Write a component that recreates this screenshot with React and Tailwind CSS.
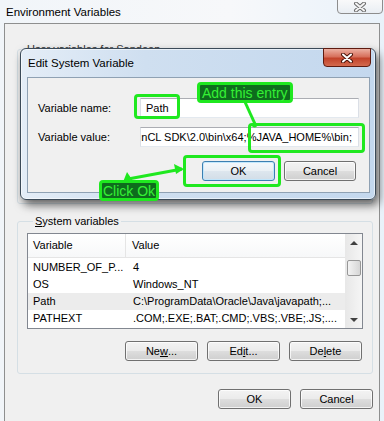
import React from "react";

const btn =
  "h-[20px] w-[73px] rounded-[3px] border border-[#707070] bg-[linear-gradient(#f3f3f3_0%,#ebebeb_48%,#dddddd_52%,#cfcfcf_100%)] shadow-[inset_0_0_0_1px_rgba(255,255,255,0.75)] flex items-center justify-center text-[11px] text-black";

const okBtn =
  "h-[20px] w-[73px] rounded-[3px] border border-[#3c7fb1] bg-[linear-gradient(#f4f8fb_0%,#eaf0f5_48%,#dde6ee_52%,#d2dde7_100%)] shadow-[inset_0_0_0_1px_rgba(190,230,253,0.9)] flex items-center justify-center text-[11px] text-black";

const green = "border-[3px] border-[#1fe81f] rounded-[4px]";

const rows = [
  ["NUMBER_OF_P...", "4"],
  ["OS", "Windows_NT"],
  ["Path", "C:\\ProgramData\\Oracle\\Java\\javapath;..."],
  ["PATHEXT", ".COM;.EXE;.BAT;.CMD;.VBS;.VBE;.JS;...."],
];

function CloseX({ dark }) {
  return (
    <svg width="14" height="10" viewBox="0 0 14 10">
      <path d="M3 1.5 L11 8.5 M11 1.5 L3 8.5" stroke={dark ? "#4a1308" : "#6b6b6b"} strokeWidth="4" strokeLinecap="round" />
      <path d="M3 1.5 L11 8.5 M11 1.5 L3 8.5" stroke={dark ? "#ffffff" : "#f4f4f4"} strokeWidth="2" strokeLinecap="round" />
    </svg>
  );
}

export default function App() {
  return (
    <div className="relative w-[384px] h-[421px] overflow-hidden bg-[linear-gradient(90deg,#f1f5f9,#f7f8fa_60%,#e9f2fa)] font-['Liberation_Sans',Arial,sans-serif] text-[11px] text-black">
      {/* window title */}
      <div className="h-[23px] flex items-start justify-between">
        <span className="ml-[6px] mt-[5px] text-[11.5px] leading-[14px]">Environment Variables</span>
        <div className="-mt-[2px] mr-[1px] h-[16px] w-[46px] rounded-b-[4px] border border-[#8d8d8d] bg-[linear-gradient(#fafafa,#e9eef3)] flex items-center justify-center pt-[1px]">
          <CloseX />
        </div>
      </div>

      {/* client area */}
      <div className="ml-[4px] mr-[4px] h-[398px] border-l border-t border-r border-[#8e8f8f] bg-[#f0f0f0] pl-[12px] pr-[6px] flex flex-col">
        <fieldset className="mt-[18px] h-[162px] border border-[#d5dfe5] rounded-[3px]">
          <legend className="ml-[7px] px-[2px] leading-[14px] text-[#333]">User variables for Sandeep</legend>
        </fieldset>

        <fieldset className="mt-[10px] h-[160px] border border-[#d5dfe5] rounded-[3px] pl-[9px] pr-[9px] pt-[5px]">
          <legend className="ml-[6px] px-[2px] leading-[14px]">
            <span className="underline">S</span>ystem variables
          </legend>
          <div className="h-[96px] border border-[#828790] bg-white flex">
            <div className="flex-1 flex flex-col">
              <div className="h-[24px] flex border-b border-[#e5e5e5] bg-[linear-gradient(#ffffff,#f7f8f9)]">
                <div className="w-[98px] pl-[5px] flex items-center border-r border-[#e5e5e5]">Variable</div>
                <div className="flex-1 pl-[6px] flex items-center">Value</div>
              </div>
              <div className="mt-[1px] flex flex-col">
                {rows.map(([k, v]) => (
                  <div key={k} className={`h-[17px] flex items-center whitespace-nowrap ${k === "Path" ? "bg-[#ececec]" : ""}`}>
                    <div className="w-[98px] pl-[5px] overflow-hidden">{k}</div>
                    <div className="flex-1 pl-[7px] overflow-hidden">{v}</div>
                  </div>
                ))}
              </div>
            </div>
            {/* scrollbar */}
            <div className="w-[17px] border-l border-[#e8e8e8] bg-[linear-gradient(90deg,#e8e8e8,#f5f5f5)] flex flex-col items-center">
              <div className="h-[17px] flex items-center justify-center">
                <div className="w-0 h-0 border-l-[4px] border-r-[4px] border-b-[4px] border-l-transparent border-r-transparent border-b-[#404040]" />
              </div>
              <div className="mt-[9px] h-[16px] w-[14px] rounded-[2px] border border-[#979797] bg-[linear-gradient(90deg,#f3f3f3,#e2e2e2_60%,#d6d6d6)]" />
              <div className="flex-1" />
              <div className="h-[17px] flex items-center justify-center">
                <div className="w-0 h-0 border-l-[4px] border-r-[4px] border-t-[4px] border-l-transparent border-r-transparent border-t-[#404040]" />
              </div>
            </div>
          </div>
          <div className="mt-[12px] mr-[1px] flex justify-end gap-[9px]">
            <div className={btn}>Ne<span className="underline">w</span>...</div>
            <div className={btn}>Ed<span className="underline">i</span>t...</div>
            <div className={btn}>De<span className="underline">l</span>ete</div>
          </div>
        </fieldset>

        <div className="mt-[15px] flex justify-end gap-[9px]">
          <div className={btn}>OK</div>
          <div className={btn}>Cancel</div>
        </div>
      </div>

      {/* Edit System Variable dialog */}
      <div className="absolute left-[20px] top-[48px] w-[356px] h-[152px] rounded-[6px] border border-[#3b4a58] bg-[linear-gradient(90deg,#e4edf7,#cfdff0_35%,#c4d8ee)] shadow-[3px_5px_10px_rgba(0,0,0,0.6),inset_0_0_0_1px_rgba(255,255,255,0.55)] flex flex-col">
        <div className="h-[28px] flex items-start justify-between">
          <span className="ml-[7px] mt-[7px] text-[11.5px] leading-[14px]">Edit System Variable</span>
          <div className="mr-[4px] -mt-[1px] h-[19px] w-[48px] rounded-b-[4px] border border-[#5e1b10] bg-[linear-gradient(#ecb0a2,#d7705c_45%,#c2432b_55%,#d36a4e)] flex items-center justify-center">
            <CloseX dark />
          </div>
        </div>
        <div className="ml-[6px] mr-[5px] mb-[6px] flex-1 border border-[#8fa1b3] bg-[#f0f0f0] flex flex-col">
          <div className="mt-[20px] flex items-center">
            <div className="pl-[10px] w-[112px]">Variable name:</div>
            <div className="h-[20px] w-[219px] border border-[#abadb3] border-l-[#dbdfe6] border-r-[#dbdfe6] border-b-[#e3e9ef] bg-white flex items-center pl-[5px]">Path</div>
          </div>
          <div className="mt-[9px] flex items-center">
            <div className="pl-[10px] w-[112px]">Variable value:</div>
            <div className="h-[20px] w-[219px] border border-[#abadb3] border-l-[#dbdfe6] border-r-[#dbdfe6] border-b-[#e3e9ef] bg-white flex items-center justify-end overflow-hidden pr-[6px] whitespace-nowrap">
              <span>nCL SDK\2.0\bin\x64;%JAVA_HOME%\bin;</span>
            </div>
          </div>
          <div className="mt-[14px] mr-[13px] flex justify-end gap-[9px]">
            <div className={okBtn}>OK</div>
            <div className="h-[20px] w-[72px] rounded-[3px] border border-[#707070] bg-[linear-gradient(#f3f3f3_0%,#ebebeb_48%,#dddddd_52%,#cfcfcf_100%)] shadow-[inset_0_0_0_1px_rgba(255,255,255,0.75)] flex items-center justify-center text-[11px]">Cancel</div>
          </div>
        </div>
      </div>

      {/* green annotations */}
      <svg className="absolute left-0 top-0 pointer-events-none" width="384" height="421" viewBox="0 0 384 421">
        <path d="M245 102 L255 124" stroke="#1fe81f" strokeWidth="3" fill="none" />
        <circle cx="254.5" cy="125" r="2.5" fill="#1fe81f" />
        <path d="M128 179 L182 169" stroke="#1fe81f" strokeWidth="3" fill="none" />
        <polygon points="174,164 184,169 176,174" fill="#1fe81f" />
        <polygon points="123,182 127,172 133,181" fill="#1fe81f" />
      </svg>
      <div className={`absolute left-[134px] top-[94px] w-[46px] h-[25px] ${green}`} />
      <div className={`absolute left-[248px] top-[123px] w-[117px] h-[30px] ${green}`} />
      <div className={`absolute left-[183px] top-[155px] w-[98px] h-[32px] ${green}`} />
      <div className={`absolute left-[197px] top-[82px] h-[21px] px-[2px] bg-[#0e6c1d] flex items-center whitespace-nowrap text-[14px] leading-[16px] text-[#35f035] ${green}`}>
        Add this entry
      </div>
      <div className={`absolute left-[99px] top-[180px] h-[21px] w-[60px] bg-[#0e6c1d] flex items-center justify-center whitespace-nowrap text-[14px] leading-[16px] text-[#35f035] ${green}`}>
        Click Ok
      </div>
    </div>
  );
}
